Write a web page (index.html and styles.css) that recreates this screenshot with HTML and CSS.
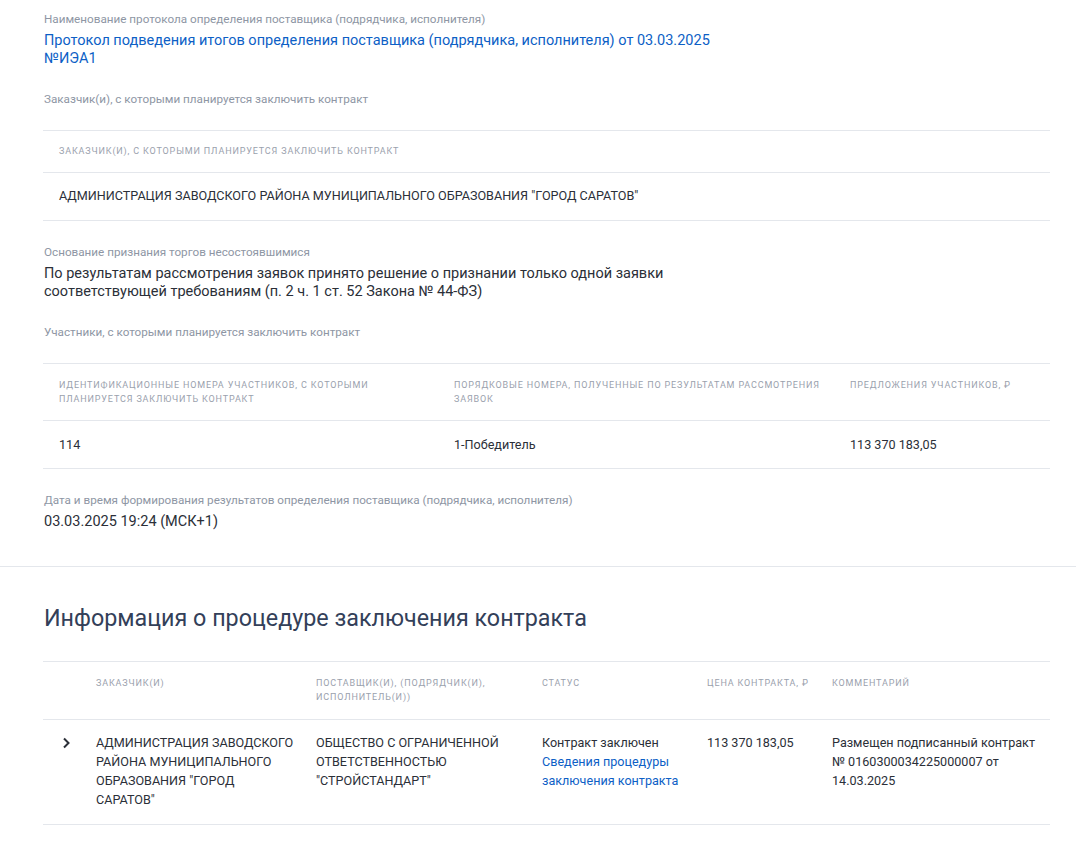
FILE: index.html
```html
<!DOCTYPE html>
<html lang="ru">
<head>
    <meta charset="UTF-8">
    <title>Результаты определения поставщика</title>
    <link rel="stylesheet" href="styles.css">
</head>
<body>
<div class="block">
    <div class="field">
        <div class="field-label">Наименование протокола определения поставщика (подрядчика, исполнителя)</div>
        <a class="field-link" href="#">Протокол подведения итогов определения поставщика (подрядчика, исполнителя) от 03.03.2025<br>№ИЭА1</a>
    </div>

    <div class="field-label">Заказчик(и), с которыми планируется заключить контракт</div>
    <table class="grid grid-customers">
        <thead>
        <tr><th>Заказчик(и), с которыми планируется заключить контракт</th></tr>
        </thead>
        <tbody>
        <tr><td>АДМИНИСТРАЦИЯ ЗАВОДСКОГО РАЙОНА МУНИЦИПАЛЬНОГО ОБРАЗОВАНИЯ "ГОРОД САРАТОВ"</td></tr>
        </tbody>
    </table>

    <div class="field">
        <div class="field-label">Основание признания торгов несостоявшимися</div>
        <div class="field-value">По результатам рассмотрения заявок принято решение о признании только одной заявки<br>соответствующей требованиям (п. 2 ч. 1 ст. 52 Закона № 44-ФЗ)</div>
    </div>

    <div class="field-label">Участники, с которыми планируется заключить контракт</div>
    <table class="grid grid-participants">
        <colgroup>
            <col style="width: 395px">
            <col style="width: 396px">
            <col>
        </colgroup>
        <thead>
        <tr>
            <th>Идентификационные номера участников, с которыми планируется заключить контракт</th>
            <th>Порядковые номера, полученные по результатам рассмотрения заявок</th>
            <th>Предложения участников, ₽</th>
        </tr>
        </thead>
        <tbody>
        <tr>
            <td>114</td>
            <td>1-Победитель</td>
            <td>113 370 183,05</td>
        </tr>
        </tbody>
    </table>

    <div class="field field-last">
        <div class="field-label">Дата и время формирования результатов определения поставщика (подрядчика, исполнителя)</div>
        <div class="field-value">03.03.2025 19:24 (МСК+1)</div>
    </div>
</div>

<div class="block block-contract">
    <h2>Информация о процедуре заключения контракта</h2>
    <table class="grid grid-contract">
        <colgroup>
            <col style="width: 45px">
            <col style="width: 220px">
            <col style="width: 226px">
            <col style="width: 165px">
            <col style="width: 125px">
            <col>
        </colgroup>
        <thead>
        <tr>
            <th></th>
            <th>Заказчик(и)</th>
            <th>Поставщик(и), (подрядчик(и), исполнитель(и))</th>
            <th>Статус</th>
            <th>Цена контракта, ₽</th>
            <th>Комментарий</th>
        </tr>
        </thead>
        <tbody>
        <tr>
            <td class="toggle">
                <svg width="10" height="12" viewBox="0 0 10 12"><path d="M3 1.5 L7.5 6 L3 10.5" fill="none" stroke="#2b2f38" stroke-width="2"/></svg>
            </td>
            <td class="customer">АДМИНИСТРАЦИЯ ЗАВОДСКОГО РАЙОНА МУНИЦИПАЛЬНОГО ОБРАЗОВАНИЯ "ГОРОД САРАТОВ"</td>
            <td>ОБЩЕСТВО С ОГРАНИЧЕННОЙ ОТВЕТСТВЕННОСТЬЮ "СТРОЙСТАНДАРТ"</td>
            <td>Контракт заключен<br><a href="#">Сведения процедуры заключения контракта</a></td>
            <td>113 370 183,05</td>
            <td>Размещен подписанный контракт № 0160300034225000007 от 14.03.2025</td>
        </tr>
        </tbody>
    </table>
</div>
</body>
</html>
```

FILE: styles.css
```css
* {
    margin: 0;
    padding: 0;
    box-sizing: border-box;
}

body {
    font-family: Roboto, "Liberation Sans", Arial, sans-serif;
    background: #fff;
    color: #2b2f38;
}

a {
    color: #0d5fc6;
    text-decoration: none;
}

.block {
    padding: 11px 26px 35px 44px;
}

.block-contract {
    border-top: 1px solid #e4e7ec;
    padding-top: 36px;
    padding-bottom: 23px;
}

.field {
    margin-bottom: 23px;
}

.field-last {
    margin-bottom: 0;
}

.field-label {
    font-size: 11.7px;
    line-height: 16px;
    color: #8e96a4;
    margin-bottom: 5px;
}

.field-link,
.field-value {
    display: block;
    font-size: 14.5px;
    line-height: 18px;
}

.field-link {
    color: #0d5fc6;
}

.field-value {
    color: #2b2f38;
}

h2 {
    font-size: 23.3px;
    font-weight: 400;
    color: #334059;
    line-height: 30px;
    margin-bottom: 28px;
}

.grid {
    width: 1007px;
    margin-left: -1px;
    border-collapse: collapse;
    table-layout: fixed;
    margin-top: 23px;
    margin-bottom: 23px;
}

.grid th,
.grid td {
    text-align: left;
    vertical-align: top;
    border-top: 1px solid #e4e7ec;
    border-bottom: 1px solid #e4e7ec;
}

.grid th {
    font-size: 9px;
    font-weight: 400;
    line-height: 14px;
    letter-spacing: 0.85px;
    text-transform: uppercase;
    color: #9aa1ad;
    padding: 14px 8px 14px 16px;
}

.grid td {
    font-size: 12.6px;
    line-height: 19px;
    color: #2b2f38;
    padding: 13px 8px 15px 16px;
}

.grid-customers th {
    padding-top: 13px;
    padding-bottom: 14px;
}

.grid-participants td {
    padding-top: 14px;
    padding-bottom: 14px;
}

.grid-contract {
    margin: 0 0 0 -1px;
}

.grid-contract th,
.grid-contract td {
    padding-left: 8px;
    padding-right: 8px;
}

.grid-contract th {
    padding-bottom: 15px;
}

.grid-contract td {
    padding-top: 13px;
    padding-bottom: 15px;
}

.grid-contract td.customer {
    padding-right: 14px;
}

.grid-contract td.toggle {
    padding-left: 18px;
    padding-top: 17px;
}

.toggle svg {
    display: block;
}
```
